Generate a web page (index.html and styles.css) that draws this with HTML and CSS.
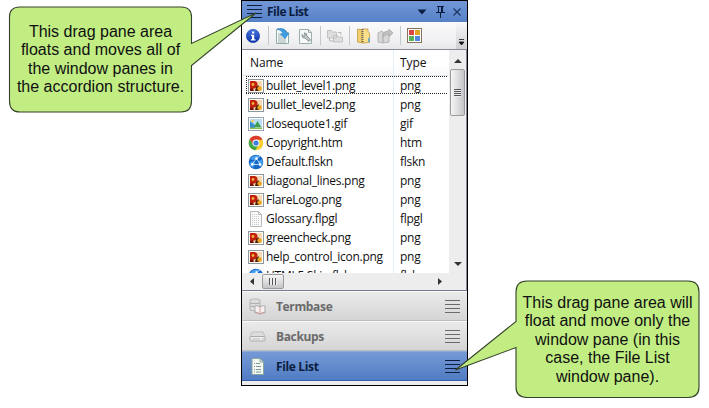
FILE: index.html
```html
<!DOCTYPE html>
<html lang="en">
<head>
<meta charset="utf-8">
<title>File List</title>
<link rel="stylesheet" href="styles.css">
</head>
<body>
<svg class="defs" width="0" height="0">
  <defs>
    <linearGradient id="orb" x1="0" y1="0" x2="0" y2="1"><stop offset="0" stop-color="#4a78e0"/><stop offset="1" stop-color="#0b2fa8"/></linearGradient>
    <symbol id="png" viewBox="0 0 16 14">
      <rect x=".5" y=".5" width="15" height="13" fill="#fffdf4" stroke="#8f989e"/>
      <rect x="2" y="2" width="12" height="10" fill="#f3d9b4"/>
      <path d="M2 2h5q3 1 2.500 4T6 9.500L2 11z" fill="#c2200f"/>
      <circle cx="5" cy="5.500" r="1.400" fill="#f2b03a"/>
      <path d="M8 8l2-1.500h1V12H7z" fill="#4a1c08"/>
      <circle cx="11.500" cy="9.500" r="2.200" fill="#eda21e"/>
      <path d="M2 9.500h3l1 2.500H2z" fill="#7a1208"/>
    </symbol>
    <symbol id="gif" viewBox="0 0 16 14">
      <rect x=".5" y=".5" width="15" height="13" fill="#fff" stroke="#9aa3ab"/>
      <rect x="2" y="2" width="12" height="10" fill="#b9dcf8"/>
      <path d="M2 4l5 4v4H2z" fill="#3a8bd0"/>
      <path d="M6 10l3.500-6 3.500 6z" fill="#3f9d4b"/><circle cx="4.500" cy="4" r="1.300" fill="#f6d04a"/>
      <path d="M2 10.500h12V12H2z" fill="#7fc04c"/>
    </symbol>
    <symbol id="chrome" viewBox="0 0 16 16">
      <circle cx="8" cy="8" r="7.300" fill="#f7cf30"/>
      <path d="M1.700 4.300A7.300 7.300 0 0 1 14.500 4.700H8L5 9z" fill="#dc3a2c"/>
      <path d="M1.700 4.300A7.300 7.300 0 0 0 7.300 15.300L10.500 10 5 9.500z" fill="#42a548"/>
      <circle cx="8" cy="8" r="3.500" fill="#fff"/><circle cx="8" cy="8" r="2.600" fill="#3c7fdc"/>
    </symbol>
    <symbol id="skin" viewBox="0 0 16 16">
      <circle cx="8" cy="8" r="7.300" fill="#1768c8"/>
      <path d="M2 5.500Q5 .5 11 1.500L8 6zM1.500 9l4-2 2 3-3 4zM10 8l4-3 1 4-3 4z" fill="#49a1ef"/>
      <path d="M8.500 4.500L4 10.500h8.500zM8.500 4.500L12 2M4 10.500l-2 1M12.500 10.500l1 2" fill="none" stroke="#b9e2ff" stroke-width=".9"/>
      <g fill="#fff"><circle cx="8.500" cy="4.500" r="1.200"/><circle cx="4.300" cy="10.300" r="1.200"/><circle cx="12" cy="10.500" r="1.200"/></g>
    </symbol>
    <symbol id="blank" viewBox="0 0 16 16">
      <path d="M2.500.5h8l3 3v12h-11z" fill="#fbfbfb" stroke="#b7b7b7"/>
      <path d="M10.500.5v3h3" fill="none" stroke="#b7b7b7"/>
      <path d="M4.500 3v11M6.500 3v11M8.500 3v11M10.500 5v9" stroke="#c9c9c9" stroke-dasharray="1 1"/>
    </symbol>
    <symbol id="grip" viewBox="0 0 15 13">
      <path d="M0 .5h15M0 4.500h15M0 8.500h15M0 12.500h15" stroke="currentColor"/>
    </symbol>
  </defs>
</svg>

<main class="window">
  <header class="titlebar">
    <svg class="title-grip"><use href="#grip"/></svg>
    <h1>File List</h1>
    <svg class="controls" viewBox="0 0 46 12" width="46" height="12">
      <path d="M.5 3.500h9L5 8.500z" fill="#0b1d40"/>
      <path d="M20 .5h7M21.500.5v6M24.500.5v6M25.500.5v6M19 6.500h9M23.500 7v5" fill="none" stroke="#0b1d40"/>
      <path d="M36.500 2.500l7 7M43.500 2.500l-7 7" stroke="#1c3562" stroke-width="1.200"/>
    </svg>
  </header>

  <div class="toolbar">
    <svg class="info" width="14" height="14" viewBox="0 0 14 14"><circle cx="7" cy="7" r="6.600" fill="url(#orb)" stroke="#1740b0" stroke-width=".7"/><path d="M6 2.500h2.200v2H6zM5 5.700h3.200v4.500H9.500v1.300H4.800v-1.300H6V7H5z" fill="#fff"/></svg>
    <i class="sep"></i>
    <svg width="16" height="16" viewBox="0 0 16 16"><path d="M1.500 1.500h8l4 4v10h-12z" fill="#f7fbfb" stroke="#91aaa7"/><path d="M3 6h4M3 8h4M3 10h8M3 12h8M3 14h8" stroke="#9ab0ab"/><path d="M2 1q8-2 9.500 4H14l-4 5.500L5.500 6H8Q7 2 2 1z" fill="#3b9ee5" stroke="#2276bd" stroke-width=".6"/></svg>
    <svg class="wrench" width="16" height="16" viewBox="0 0 16 16"><path d="M1.500 1.500h9l3 3v11h-12z" fill="#f6f9f8" stroke="#9aaeab"/><path d="M10.500 1.500v3h3" fill="none" stroke="#9aaeab"/><path d="M4 6.500l1.700 1.700L7.300 7 6 5q3-.5 3 3l3.500 4-1.500 1.500L7 10Q3.500 10 4 6.500z" fill="#c1c9ca" stroke="#707d80" stroke-width=".8"/></svg>
    <i class="sep"></i>
    <svg class="folders" width="16" height="16" viewBox="0 0 16 16"><path d="M.5 2.500h4l1 1.500h4v6h-9zM6.500 7.500h4l1 1.500h4v5h-9z" fill="#dedede" stroke="#c2c2c2"/><path d="M2.500 10v3h4M11 4.500h3V7" fill="none" stroke="#b8b8b8"/></svg>
    <i class="sep"></i>
    <svg class="zip" width="16" height="16" viewBox="0 0 16 16"><path d="M1.500 1l6 1v13l-6-1z" fill="#f1cf70" stroke="#c39b38" stroke-width=".8"/><path d="M6 1h6v3l1.500 1v9.500L6 15z" fill="#f9df8d" stroke="#c39b38" stroke-width=".8"/><path d="M6.500 1v14" stroke="#6e6a60" stroke-width="2" stroke-dasharray="1 1"/><path d="M13 10v4" stroke="#4ca1d7" stroke-width="1.500"/></svg>
    <svg class="export" width="17" height="16" viewBox="0 0 17 16"><path d="M1 5l4-2 1 1v11l-5-1zM6 5h6v9l-6 1z" fill="#d7d7d7" stroke="#b6b6b6"/><path d="M6 7q0-4 6-4V1l4 4-4 4V6Q9 6 6 9z" fill="#c0c0c0" stroke="#a9a9a9" stroke-width=".7"/></svg>
    <i class="sep"></i>
    <svg class="tiles" width="15" height="15" viewBox="0 0 15 15"><rect x=".5" y=".5" width="14" height="14" fill="#fff" stroke="#85745f"/><path d="M2 2h5v5H2z" fill="#dc4545"/><path d="M8 2h5v5H8z" fill="#e5a325"/><path d="M2 8h5v5H2z" fill="#57b355"/><path d="M8 8h5v5H8z" fill="#5685dc"/><path d="M7.500 1v13M1 7.500h13" stroke="#fff"/></svg>
    <div class="overflow"><svg width="7" height="7" viewBox="0 0 7 7"><path d="M1 .5h5M1 3h5L3.500 6z" stroke="#111" stroke-width=".8" fill="#111"/></svg></div>
  </div>

  <section class="browser">
    <div class="listing">
      <div class="row head"><span>Name</span><span>Type</span></div>
      <div class="row focus"><span><svg><use href="#png"/></svg>bullet_level1.png</span><span>png</span></div>
      <div class="row"><span><svg><use href="#png"/></svg>bullet_level2.png</span><span>png</span></div>
      <div class="row"><span><svg><use href="#gif"/></svg>closequote1.gif</span><span>gif</span></div>
      <div class="row"><span><svg><use href="#chrome"/></svg>Copyright.htm</span><span>htm</span></div>
      <div class="row"><span><svg><use href="#skin"/></svg>Default.flskn</span><span>flskn</span></div>
      <div class="row"><span><svg><use href="#png"/></svg>diagonal_lines.png</span><span>png</span></div>
      <div class="row"><span><svg><use href="#png"/></svg>FlareLogo.png</span><span>png</span></div>
      <div class="row"><span><svg><use href="#blank"/></svg>Glossary.flpgl</span><span>flpgl</span></div>
      <div class="row"><span><svg><use href="#png"/></svg>greencheck.png</span><span>png</span></div>
      <div class="row"><span><svg><use href="#png"/></svg>help_control_icon.png</span><span>png</span></div>
      <div class="row"><span><svg><use href="#skin"/></svg>HTML5 Skin.flskn</span><span>flskn</span></div>
    </div>
    <div class="vscroll">
      <svg width="8" height="4" viewBox="0 0 8 4"><path d="M0 4h8L4 0z" fill="#333"/></svg>
      <div class="vthumb"><i></i></div>
      <svg class="down" width="8" height="4" viewBox="0 0 8 4"><path d="M0 0h8L4 4z" fill="#333"/></svg>
    </div>
    <div class="hscroll">
      <svg width="4" height="7" viewBox="0 0 4 7"><path d="M4 0v7L0 3.500z" fill="#333"/></svg>
      <div class="hthumb"><i></i></div>
      <svg class="right" width="4" height="7" viewBox="0 0 4 7"><path d="M0 0v7l4-3.500z" fill="#333"/></svg>
    </div>
  </section>

  <nav class="accordion">
    <div class="tab">
      <svg class="tab-icon" viewBox="0 0 17 17"><path d="M1 2q0-1 5-1t5 1v10q-5 2-10 0z" fill="#ddd" stroke="#b5b5b5"/><path d="M1 5q5 1.500 10 0M1 8q5 1.500 10 0" fill="none" stroke="#aaa"/><path d="M6 8q3-1 5 1 2-2 5-1v7q-3-1-5 1-2-2-5-1z" fill="#f5f1f1" stroke="#aaa"/><path d="M11 9v7M6 14l5 2 5-2" fill="none" stroke="#cf9d9b"/></svg>
      <span>Termbase</span><svg class="tab-grip"><use href="#grip"/></svg>
    </div>
    <div class="tab">
      <svg class="tab-icon" viewBox="0 0 17 17"><path d="M3 4h11l2 5H1z" fill="#ddd" stroke="#c0c0c0"/><rect x="1" y="8.500" width="15" height="4.500" rx="1" fill="#eee" stroke="#aaa"/><path d="M3 11h8" stroke="#bbb"/><path d="M13 11h1.500" stroke="#8eb58e"/></svg>
      <span>Backups</span><svg class="tab-grip"><use href="#grip"/></svg>
    </div>
    <div class="tab active">
      <svg class="tab-icon" viewBox="0 0 17 17"><path d="M3 .5h8l3.500 3.500v12.500H3z" fill="#f4f9f3" stroke="#88a69d"/><path d="M11 .5V4h3.500" fill="none" stroke="#88a69d"/><path d="M5 5.500h1M7 5.500h4M5 8.500h1M7 8.500h5M5 11.500h1M7 11.500h5M5 14h1M7 14h5" stroke="#7d9a94"/></svg>
      <span>File List</span><svg class="tab-grip"><use href="#grip"/></svg>
    </div>
  </nav>
  <footer class="status"></footer>
</main>

<svg class="bubbles" width="709" height="408" viewBox="0 0 709 408">
  <path d="M20 7H181Q191.500 7 191.500 17V43.500L256 13 191.500 65.500V101Q191.500 112 181 112H20Q9.500 112 9.500 101V17Q9.500 7 20 7Z"/>
  <path d="M527 281H688Q699 281 699 292V387Q699 397.500 688 397.500H527Q516 397.500 516 387V347.500L455.500 370 516 321.500V292Q516 281 527 281Z"/>
</svg>
<div class="note note-top"><span>This drag pane area</span><span>floats and moves all of</span><span>the window panes in</span><span>the accordion structure.</span></div>
<div class="note note-bottom"><span>This drag pane area will</span><span>float and move only the</span><span>window pane (in this</span><span>case, the File List</span><span>window pane).</span></div>
</body>
</html>
```

FILE: styles.css
```css
* { box-sizing: border-box; }
body { margin: 0; width: 709px; height: 408px; overflow: hidden; background: #fff; color: #111; font: 12px "Open Sans", "Noto Sans", sans-serif; }
svg { display: block; flex: none; }
.defs { position: absolute; }
.window { display: flex; flex-direction: column; width: 227px; height: 386px; margin-left: 241px; border: 1px solid #000; background: #f0f0f0; overflow: hidden; }

.titlebar { display: flex; align-items: center; height: 21px; padding: 0 5px; background: linear-gradient(#7297d6, #5681c7); }
.title-grip { width: 15px; height: 13px; color: #0b1d40; }
h1 { flex: 1; margin: 0 0 0 5px; font-size: 12px; line-height: 20px; font-weight: 700; letter-spacing: -.5px; color: #0b1d40; }
.controls { margin-right: -1px; }

.toolbar { display: flex; align-items: center; height: 28px; padding-left: 4px; background: linear-gradient(#fbfbfc, #efeff1 75%, #e7e7e9); border-bottom: 1px solid #858b96; }
.info { margin-right: 2px; }
.sep { width: 1px; height: 19px; margin: 0 6px; background: #c5c6c9; }
.wrench { margin-left: 7px; }
.export { margin-left: 5px; }
.overflow { display: flex; align-items: end; justify-content: center; align-self: stretch; width: 11px; margin-left: auto; padding-bottom: 3px; background: linear-gradient(#f9f9fa, #cfcfd2); border-radius: 4px 0 0 0; }

.browser { display: grid; grid-template: 223px 17px / 207px 1fr; height: 241px; background: #fff; border-bottom: 1px solid #747c8d; border-right: 1px solid #858b96; }
.listing { overflow: hidden; }
.row { display: grid; grid-template-columns: 152px 1fr; height: 19px; line-height: 18px; letter-spacing: -.27px; }
.row > span { display: flex; align-items: center; padding-left: 6px; white-space: nowrap; }
.row > span:first-child { border-right: 1px solid #e3eef6; }
.row svg { width: 16px; height: 16px; margin-right: 2px; }
.row.head { height: 26px; line-height: 26px; letter-spacing: -.1px; border-bottom: 1px solid #e3e6ea; background: linear-gradient(#fff 60%, #f8f9fb); }
.row.head > span:first-child { padding-left: 8px; }
.row.focus { background: repeating-linear-gradient(90deg, #222 0 1px, #fff 1px 2px) 4px 0 / 202px 1px no-repeat, repeating-linear-gradient(90deg, #222 0 1px, #fff 1px 2px) 4px 17px / 202px 1px no-repeat, repeating-linear-gradient(#222 0 1px, #fff 1px 2px) 4px 0 / 1px 17px no-repeat; }

.vscroll { display: flex; flex-direction: column; align-items: center; padding: 9px 0 7px; background: #ededee; }
.vthumb { display: flex; align-items: center; justify-content: center; width: 15px; height: 47px; margin-top: 6px; border: 1px solid #9b9b9e; border-radius: 2px; background: linear-gradient(90deg, #f5f5f5, #dedee0 50%, #c5c5c9); }
.vthumb i { width: 7px; height: 8px; background: repeating-linear-gradient(#555 0 1px, #eee 1px 2px); }
.down { margin-top: auto; }
.hscroll { display: flex; grid-column: 1 / -1; align-items: center; padding-left: 8px; background: #ededee; }
.hthumb { display: flex; align-items: center; justify-content: center; width: 22px; height: 15px; margin-left: 8px; border: 1px solid #9b9b9e; border-radius: 2px; background: linear-gradient(#f5f5f5, #dedee0 50%, #c5c5c9); }
.hthumb i { width: 8px; height: 7px; background: repeating-linear-gradient(90deg, #555 0 1px, #eee 1px 3px); }
.right { margin-left: auto; margin-right: 24px; }

.tab { display: flex; align-items: center; height: 30px; padding: 0 7px; border-top: 1px solid #fafafa; border-bottom: 1px solid #bdbdbd; background: linear-gradient(#eaeaea, #d5d5d5); color: #6a6a6a; font-weight: 700; letter-spacing: -.35px; }
.tab-icon { width: 17px; height: 17px; margin-right: 10px; }
.tab-grip { width: 15px; height: 13px; margin-left: auto; }
.tab.active { color: #0b1d40; border-top-color: #8eabe0; border-bottom-color: #345fae; background: linear-gradient(#7699d5, #507cc4); }
.status { flex: 1; background: #ececec; }

.bubbles { position: absolute; left: 0; top: 0; fill: #c1ed83; stroke: #344229; stroke-width: 1.100; }
.note { position: absolute; display: flex; flex-direction: column; align-items: center; color: #101010; font: 16px/18.400px "Liberation Sans", sans-serif; white-space: nowrap; }
.note-top { left: 10px; top: 23px; width: 181px; }
.note-bottom { left: 516px; top: 294px; width: 183px; }
```
